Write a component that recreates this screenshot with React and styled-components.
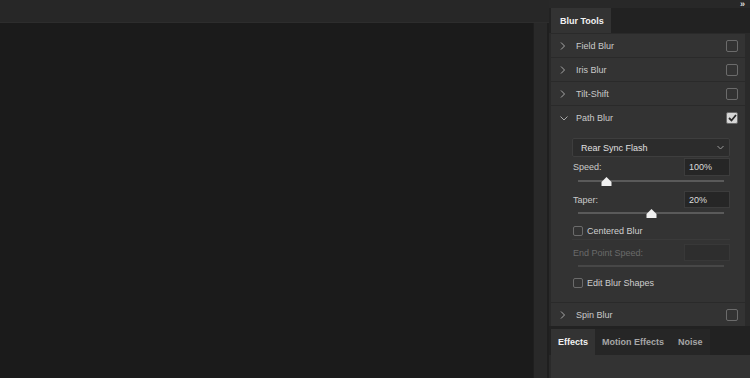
import React from "react";
import styled, { createGlobalStyle } from "styled-components";

const Global = createGlobalStyle`
  html, body { margin: 0; padding: 0; background: #1b1b1b; overflow: hidden; }
  * { box-sizing: border-box; }
  body { font-family: "Liberation Sans", Arial, sans-serif; font-size: 9px; }
`;

const Frame = styled.div`
  display: flex;
  width: 750px;
  height: 378px;
  overflow: hidden;
`;

const Workspace = styled.div`
  width: 549px;
  display: flex;
  flex-direction: column;
`;

const TopBar = styled.div`
  height: 23px;
  background: #272727;
  border-bottom: 1px solid #2d2d2d;
`;

const WorkBody = styled.div`
  flex: 1;
  display: flex;
`;

const Canvas = styled.div`
  flex: 1;
  background: #1b1b1b;
`;

const Gutter = styled.div`
  width: 16px;
  background: #292929;
  border-left: 1px solid #1f1f1f;
  border-right: 2px solid #1f1f1f;
`;

const Panel = styled.div`
  width: 201px;
  display: flex;
  flex-direction: column;
  background: #2a2a2a;
`;

const PanelTop = styled.div`
  height: 8px;
  background: #282828;
  display: flex;
  justify-content: flex-end;
  align-items: center;
  padding-right: 5px;
`;

const Collapse = styled.span`
  color: #dcdcdc;
  font-size: 9px;
  font-weight: bold;
  line-height: 8px;
`;

const TabBar = styled.div`
  height: ${(p) => p.$h}px;
  background: #222222;
  display: flex;
  align-items: stretch;
  padding-left: 2px;
  padding-top: ${(p) => p.$pt || 0}px;
`;

const Tab = styled.div`
  display: flex;
  align-items: center;
  padding: 0 ${(p) => p.$pr || 7}px 0 ${(p) => p.$pl || 7}px;
  background: ${(p) => (p.$active ? "#333333" : "#262626")};
  color: ${(p) => (p.$active ? "#f2f2f2" : "#a6a6a6")};
  font-weight: bold;
  font-size: 9px;
`;

const RowList = styled.div`
  display: flex;
  flex-direction: column;
  gap: 1px;
  padding: 1px 5px 0 2px;
  background: #2a2a2a;
`;

const Row = styled.div`
  height: 23px;
  display: flex;
  align-items: center;
  background: #333333;
  padding: 0 7px 0 9px;
  color: #cacaca;
`;

const Section = styled.div`
  background: #333333;
  display: flex;
  flex-direction: column;
`;

const Chevron = styled.svg`
  width: ${(p) => p.$w || 6}px;
  height: 8px;
  margin-right: ${(p) => p.$mr || 10}px;
  flex: none;
`;

const RowLabel = styled.span`
  flex: 1;
`;

const Box = styled.div`
  width: 12px;
  height: 12px;
  border: 1px solid #6b6b6b;
  border-radius: 2px;
  background: ${(p) => (p.$checked ? "#d6d6d6" : "transparent")};
  display: flex;
  align-items: center;
  justify-content: center;
  flex: none;
`;

const Body = styled.div`
  display: flex;
  flex-direction: column;
  padding: 9px 15px 14px 21px;
`;

const Select = styled.div`
  height: 19px;
  display: flex;
  align-items: center;
  justify-content: space-between;
  background: #2c2c2c;
  border: 1px solid #3e3e3e;
  border-radius: 2px;
  padding: 0 5px 0 8px;
  color: #e0e0e0;
`;

const FieldRow = styled.div`
  display: flex;
  align-items: center;
  justify-content: space-between;
  height: ${(p) => p.$h}px;
  margin-top: ${(p) => p.$mt}px;
  color: ${(p) => (p.$disabled ? "#6a6a6a" : "#cacaca")};
  padding-left: 1px;
`;

const Input = styled.div`
  width: 46px;
  height: 100%;
  background: ${(p) => (p.$disabled ? "#2e2e2e" : "#262626")};
  border: 1px solid ${(p) => (p.$disabled ? "#383838" : "#3c3c3c")};
  color: #dcdcdc;
  display: flex;
  align-items: center;
  padding-left: 4px;
`;

const Slider = styled.div`
  position: relative;
  height: 10px;
  margin: 0 6px;
  display: flex;
  align-items: center;
`;

const Track = styled.div`
  flex: 1;
  height: 2px;
  background: ${(p) => (p.$disabled ? "#474747" : "#5a5a5a")};
`;

const Thumb = styled.svg`
  position: absolute;
  top: 1px;
  width: 11px;
  height: 9px;
  margin-left: -5.5px;
`;

const CheckRow = styled.div`
  display: flex;
  align-items: center;
  height: 11px;
  margin-top: ${(p) => p.$mt}px;
  color: #cecece;
  padding-left: 1px;
`;

const SmallBox = styled.div`
  width: 10px;
  height: 10px;
  border: 1px solid #6b6b6b;
  border-radius: 2px;
  margin-right: 4px;
`;

const Divider = styled.div`
  height: 1px;
  margin-top: 3px;
  background: #3a3a3a;
`;

const PanelFill = styled.div`
  flex: 1;
  background: #333333;
  margin-left: 2px;
`;

const ChevronRight = () => (
  <Chevron viewBox="0 0 6 8">
    <polyline points="1,0.5 4.5,4 1,7.5" fill="none" stroke="#a8a8a8" strokeWidth="1" />
  </Chevron>
);

const ChevronDown = () => (
  <Chevron viewBox="0 0 8 8" $w={8} $mr={8}>
    <polyline points="0.5,2.5 4,6 7.5,2.5" fill="none" stroke="#a8a8a8" strokeWidth="1" />
  </Chevron>
);

const SliderThumb = ({ pos }) => (
  <Thumb viewBox="0 0 11 9" style={{ left: `${pos}%` }}>
    <polygon points="5.5,0 10.5,5 10.5,9 0.5,9 0.5,5" fill="#f0f0f0" />
  </Thumb>
);

const BlurRow = ({ label, checked }) => (
  <Row>
    <ChevronRight />
    <RowLabel>{label}</RowLabel>
    <Box $checked={checked} />
  </Row>
);

export default function App() {
  return (
    <Frame>
      <Global />
      <Workspace>
        <TopBar />
        <WorkBody>
          <Canvas />
          <Gutter />
        </WorkBody>
      </Workspace>
      <Panel>
        <PanelTop>
          <Collapse>»</Collapse>
        </PanelTop>
        <TabBar $h={25}>
          <Tab $active $pl={9} $pr={7}>Blur Tools</Tab>
        </TabBar>
        <RowList>
          <BlurRow label="Field Blur" />
          <BlurRow label="Iris Blur" />
          <BlurRow label="Tilt-Shift" />
          <Section>
            <Row>
              <ChevronDown />
              <RowLabel>Path Blur</RowLabel>
              <Box $checked>
                <svg width="9" height="8" viewBox="0 0 9 8">
                  <polyline points="1,4 3.5,6.5 8,1" fill="none" stroke="#2a2a2a" strokeWidth="1.8" />
                </svg>
              </Box>
            </Row>
            <Body>
              <Select>
                <span>Rear Sync Flash</span>
                <svg width="7" height="5" viewBox="0 0 7 5">
                  <polyline points="0.5,1 3.5,4 6.5,1" fill="none" stroke="#9a9a9a" strokeWidth="1" />
                </svg>
              </Select>
              <FieldRow $h={18} $mt={1}>
                <span>Speed:</span>
                <Input>100%</Input>
              </FieldRow>
              <Slider>
                <Track />
                <SliderThumb pos={19.5} />
              </Slider>
              <FieldRow $h={17} $mt={5}>
                <span>Taper:</span>
                <Input>20%</Input>
              </FieldRow>
              <Slider>
                <Track />
                <SliderThumb pos={50} />
              </Slider>
              <CheckRow $mt={7}>
                <SmallBox />
                <span>Centered Blur</span>
              </CheckRow>
              <Divider />
              <FieldRow $h={17} $mt={4} $disabled>
                <span>End Point Speed:</span>
                <Input $disabled />
              </FieldRow>
              <Slider>
                <Track $disabled />
              </Slider>
              <CheckRow $mt={6}>
                <SmallBox />
                <span>Edit Blur Shapes</span>
              </CheckRow>
            </Body>
          </Section>
          <BlurRow label="Spin Blur" />
        </RowList>
        <TabBar $h={29} $pt={3}>
          <Tab $active>Effects</Tab>
          <Tab>Motion Effects</Tab>
          <Tab>Noise</Tab>
        </TabBar>
        <PanelFill />
      </Panel>
    </Frame>
  );
}
